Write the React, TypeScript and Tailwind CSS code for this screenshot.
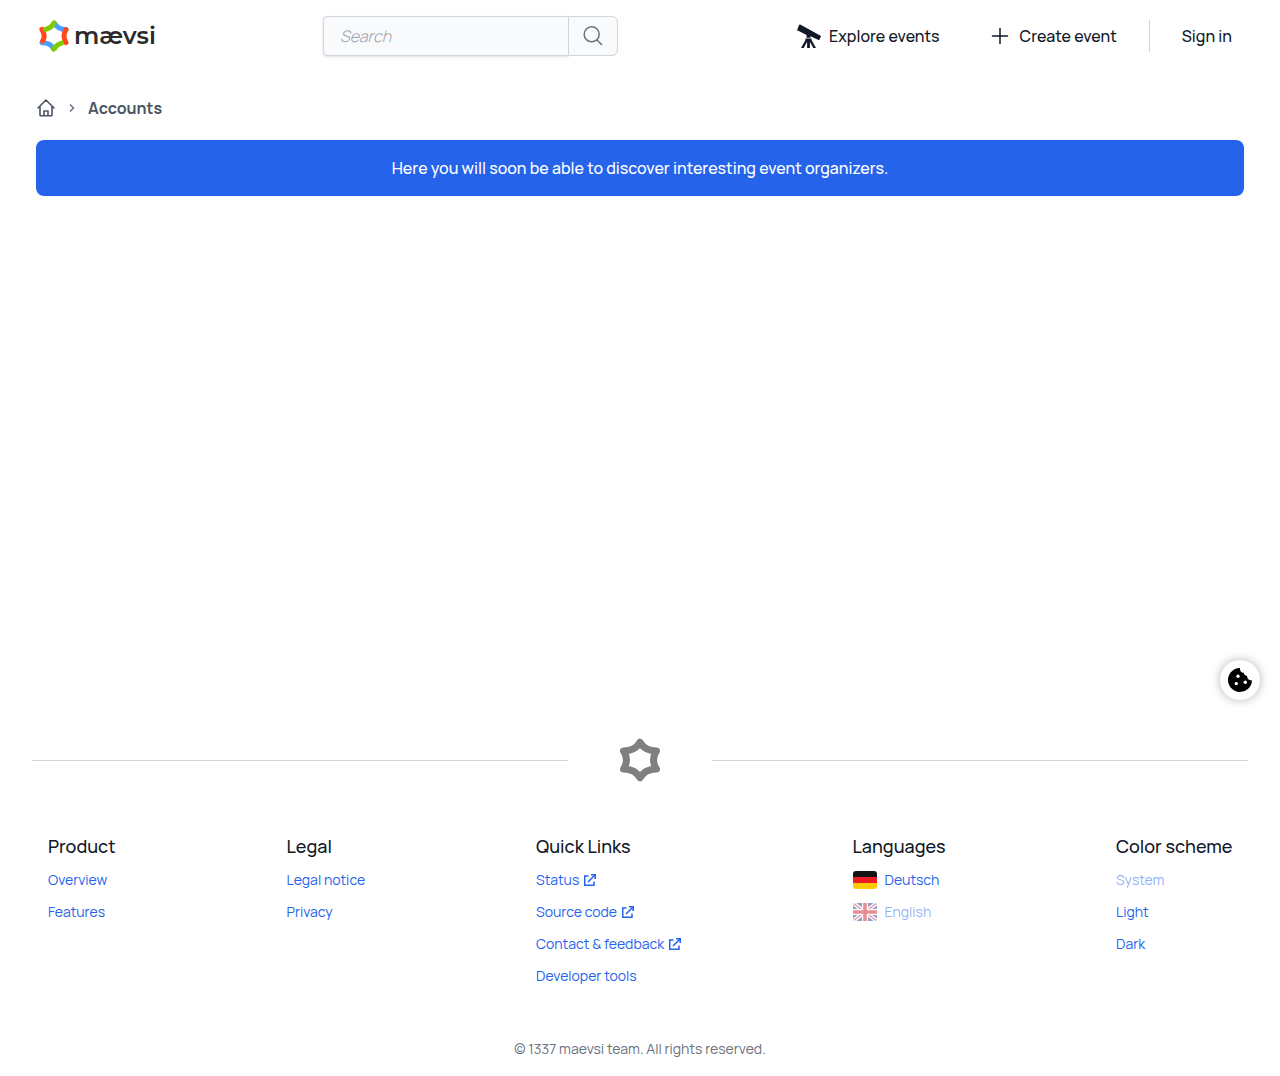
import type { ReactNode } from "react";

function BrandStar() {
  return (
    <svg className="h-8 w-8 shrink-0" viewBox="0 0 32 32" fill="none" strokeWidth="5" strokeLinecap="round" aria-hidden="true">
      <path d="M17 4.200Q20.500 9.600 28 9.600" stroke="#4a9fff" />
      <path d="M28 9.600Q24 16 28 22.600" stroke="#ff4a1c" />
      <path d="M3.900 22.700Q11.500 22.400 15.200 28" stroke="#4a9fff" />
      <path d="M3.900 9.400Q8 16 4.600 21" stroke="#ff4a1c" />
      <path d="M16 29.200Q19 23.600 25.500 22.600" stroke="#7ccb00" strokeLinecap="butt" />
      <path d="M15.700 29.200L16 28.600" stroke="#7ccb00" />
      <path d="M16 2.800Q13.500 8 7.500 9.400" stroke="#7ccb00" />
    </svg>
  );
}

function GrayStar() {
  return (
    <svg className="h-11 w-11" viewBox="0 0 44 44" fill="none" stroke="#808080" strokeWidth="7" strokeLinecap="round" strokeLinejoin="round" aria-hidden="true">
      <path d="M22 4.200Q27 12.900 38.500 12.900Q32.600 22 38.500 31.100Q27 31.100 22 39.800Q17 31.100 5.500 31.100Q11.400 22 5.500 12.900Q17 12.900 22 4.200Z" />
    </svg>
  );
}

function Telescope() {
  return (
    <svg className="h-6 w-6" viewBox="0 0 24 24" fill="currentColor" aria-hidden="true">
      <path d="M2.400.8Q3 .4 3.600.7L23.600 11.700Q24.100 12 23.900 12.500L22.400 15.700Q22.100 16.200 21.600 15.900L13.500 12.200 9.600 10.900.7 6.600Q0 6.200.3 5.500L1.900 1.400Q2 1 2.400.8Z" />
      <path d="M9.500 11.300Q11.500 10 13.500 12.200V13.800H9.500zM8.500 14.600h6v1.500L19 24h-2.700l-3.400-6.200V24h-2.800v-6.200L6.700 24H4l4.500-7.900z" />
    </svg>
  );
}

function External() {
  return (
    <svg className="h-4 w-4 shrink-0" viewBox="0 0 16 16" aria-hidden="true">
      <path d="M6.500 4H2.750V13.250H12V9.500" fill="none" stroke="currentColor" strokeWidth="1.500" />
      <path d="M6 10 12.500 3.500" fill="none" stroke="currentColor" strokeWidth="1.600" />
      <path fill="currentColor" d="M9 2H14v5h-1.600V3.600H9z" />
    </svg>
  );
}

function FlagGermany() {
  return (
    <svg className="h-[18px] w-6 rounded-[3px]" viewBox="0 0 24 18" aria-hidden="true">
      <path fill="#141414" d="M0 0h24v6H0z" />
      <path fill="#ed1c24" d="M0 6h24v6H0z" />
      <path fill="#ffcb05" d="M0 12h24v6H0z" />
    </svg>
  );
}

function FlagUK() {
  return (
    <svg className="h-[18px] w-6 rounded-[3px] opacity-50" viewBox="0 0 24 18" aria-hidden="true">
      <path fill="#21409a" d="M0 0h24v18H0z" />
      <path stroke="#fff" strokeWidth="4" d="m0 0 24 18M24 0 0 18" />
      <path stroke="#d0202f" strokeWidth="1.200" d="m0 0 24 18M24 0 0 18" />
      <path stroke="#fff" strokeWidth="6" d="M12 0v18M0 9h24" />
      <path stroke="#d0202f" strokeWidth="3.600" d="M12 0v18M0 9h24" />
    </svg>
  );
}

type Item = { label: string; external?: boolean; muted?: boolean; flag?: ReactNode };

function Column({ title, items, width, buttons }: { title: string; items: Item[]; width: string; buttons?: boolean }) {
  return (
    <div className={`${width} whitespace-nowrap`}>
      <h2 className="text-[18px] leading-7 font-medium">{title}</h2>
      <ul className="mt-1 text-[14px]">
        {items.map((item) => {
          const style = `flex h-8 items-center ${item.flag ? "gap-2" : "gap-[3px]"} ${item.muted ? "text-[#2563eb]/50" : "text-[#2563eb]"}`;
          const content = (
            <>
              {item.flag}
              {item.label}
              {item.external && <External />}
            </>
          );
          return (
            <li key={item.label}>
              {buttons ? (
                <button type="button" disabled={item.muted} className={style}>{content}</button>
              ) : (
                <a href="#" className={style}>{content}</a>
              )}
            </li>
          );
        })}
      </ul>
    </div>
  );
}

export default function App() {
  return (
    <div className="relative flex flex-col bg-white font-['Manrope','Inter',sans-serif] text-[16px] leading-6 text-[#111827]">
      <header className="flex h-18 items-center justify-between px-8">
        <a href="#" aria-label="maevsi" className="flex w-32 items-center gap-1 pl-1.5">
          <BrandStar />
          <span className="font-['Montserrat','Inter',sans-serif] text-[24px] leading-8 font-semibold text-[#2b2b2b]">mævsi</span>
        </a>
        <form role="search" className="flex h-10 w-[295px]" onSubmit={(e) => e.preventDefault()}>
          <input
            type="search"
            aria-label="Search"
            placeholder="Search"
            className="min-w-0 flex-1 rounded-l border border-[#d1d5db] bg-[#f9fafb] px-4 font-light shadow-sm placeholder:text-[#9ca3af] placeholder:italic"
          />
          <button type="submit" aria-label="Search" className="flex w-[49px] items-center justify-center rounded-r-md border border-l-0 border-[#d1d5db] bg-[#f9fafb] text-[#6b7280]">
            <svg className="h-6 w-6" viewBox="0 0 24 24" fill="none" stroke="currentColor" strokeWidth="1.5" strokeLinecap="round" aria-hidden="true">
              <path d="m21 21-5.200-5.200a7.500 7.500 0 1 0-10.600-10.600 7.500 7.500 0 0 0 10.600 10.600Z" />
            </svg>
          </button>
        </form>
        <nav className="flex items-center gap-4 font-medium whitespace-nowrap">
          <a href="#" className="flex items-center gap-2 px-4">
            <Telescope />
            Explore events
          </a>
          <a href="#" className="flex items-center gap-2 px-4">
            <svg className="h-6 w-6" viewBox="0 0 24 24" fill="none" stroke="currentColor" strokeWidth="1.5" strokeLinecap="round" aria-hidden="true">
              <path d="M12 4.500v15M4.500 12h15" />
            </svg>
            Create event
          </a>
          <span className="h-8 w-px bg-[#d1d5db]" />
          <a href="#" className="px-4">Sign in</a>
        </nav>
      </header>

      <main className="min-h-[648px] px-9 pt-6">
        <nav aria-label="Breadcrumb" className="flex h-6 items-center font-bold text-[#4b5563]">
          <a href="#" aria-label="Home">
            <svg className="h-5 w-5" viewBox="0 0 20 20" fill="none" stroke="currentColor" strokeWidth="1.600" strokeLinecap="round" strokeLinejoin="round" aria-hidden="true">
              <path d="M2 10 10 2l8 8M4 8.500V17a.8.8 0 0 0 .8.8h10.400A.8.8 0 0 0 16 17V8.500M8 17.500V13h4v4.500" />
            </svg>
          </a>
          <svg className="mx-2 h-4 w-4 text-[#6b7280]" viewBox="0 0 16 16" fill="none" stroke="currentColor" strokeWidth="1.500" aria-hidden="true">
            <path d="m6 4.500 3.500 3.500L6 11.500" />
          </svg>
          <a href="#">Accounts</a>
        </nav>
        <p className="mt-5 rounded-lg bg-[#2563eb] p-4 text-center font-medium text-white">
          Here you will soon be able to discover interesting event organizers.
        </p>
      </main>

      <button type="button" aria-label="Cookie control" className="absolute top-[660px] right-5 flex h-10 w-10 items-center justify-center rounded-full bg-white text-black shadow-[0_0_10px_rgba(0,0,0,0.3)]">
        <svg className="h-6 w-6" viewBox="0 0 24 24" aria-hidden="true">
          <path fill="currentColor" d="M12 0A12 12 0 1 0 24 12.500Q21 12.600 19.800 10.700Q19 9.300 19.300 8.200Q17.500 8 16.400 6.600Q15.700 5.600 15.900 4.800Q14 5 12.800 3.400Q11.800 2 12 0Z" />
          <g fill="#fff">
            <circle cx="10" cy="8.300" r="1.700" />
            <circle cx="8.300" cy="15.600" r="1.700" />
            <circle cx="17.300" cy="14.300" r="1.700" />
          </g>
        </svg>
      </button>

      <footer className="px-8 pt-[18px]">
        <div className="flex items-center">
          <span className="h-px flex-1 bg-[#d1d5db]" />
          <span className="flex w-36 justify-center">
            <GrayStar />
          </span>
          <span className="h-px flex-1 bg-[#d1d5db]" />
        </div>
        <div className="mt-[50px] flex justify-between px-4">
          <Column title="Product" width="w-[68px]" items={[{ label: "Overview" }, { label: "Features" }]} />
          <Column title="Legal" width="w-[79px]" items={[{ label: "Legal notice" }, { label: "Privacy" }]} />
          <Column
            title="Quick Links"
            width="w-[146px]"
            items={[
              { label: "Status", external: true },
              { label: "Source code", external: true },
              { label: "Contact & feedback", external: true },
              { label: "Developer tools" },
            ]}
          />
          <Column
            title="Languages"
            width="w-[93px]"
            items={[
              { label: "Deutsch", flag: <FlagGermany /> },
              { label: "English", flag: <FlagUK />, muted: true },
            ]}
          />
          <Column title="Color scheme" width="w-[116px]" buttons items={[{ label: "System", muted: true }, { label: "Light" }, { label: "Dark" }]} />
        </div>
        <p className="mt-[45px] pb-[15px] text-center text-[14px] leading-6 text-[#6b7280]">© 1337 maevsi team. All rights reserved.</p>
      </footer>
    </div>
  );
}
